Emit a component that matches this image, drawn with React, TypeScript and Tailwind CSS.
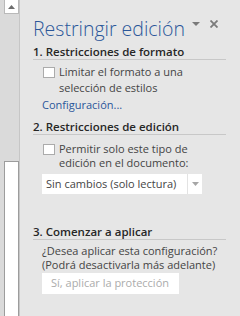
const font = { fontFamily: '"Segoe UI", "Open Sans", "Liberation Sans", sans-serif' };

function Checkbox({ className }: { className: string }) {
  return <span className={`h-[11px] w-[12px] shrink-0 border border-[#ababab] bg-white ${className}`} />;
}

function SectionTitle({ children }: { children: string }) {
  return (
    <div className="border-b border-[#c8c8c8] text-[11.5px] font-semibold leading-[14px] text-[#262626]">
      {children}
    </div>
  );
}

export default function App() {
  return (
    <div className="flex h-[316px] w-[240px] overflow-hidden bg-[#e6e6e6]" style={font}>
      {/* scroll bar */}
      <div className="flex w-[20px] shrink-0 flex-col border-r border-[#c6c6c6] bg-[#dadada] pl-[4px] pr-[1px]">
        <div className="flex h-[14px] w-[15px] items-center justify-center border border-t-0 border-[#b9b9b9] bg-white">
          <svg width="7" height="4" viewBox="0 0 7 4">
            <path d="M0 4 L3.5 0 L7 4 Z" fill="#6d6d6d" />
          </svg>
        </div>
        <div className="h-[147px]" />
        <div className="w-[15px] flex-1 border border-b-0 border-[#9c9c9c] bg-white" />
      </div>

      {/* task pane */}
      <div className="flex-1 whitespace-nowrap pl-[13px] pr-[14px] text-[11px] text-[#444444]">
        <div className="flex items-center pt-[15px]">
          <span className="text-[19.5px] font-light leading-[28px] text-[#2b579a]">Restringir edición</span>
          <svg className="ml-[7px] mt-[-11px]" width="8" height="4" viewBox="0 0 8 4">
            <path d="M0 0 L8 0 L4 4 Z" fill="#7a7a7a" />
          </svg>
          <svg className="ml-[10px] mt-[-11px]" width="8" height="8" viewBox="0 0 8 8">
            <path d="M0.5 0.5 L7.5 7.5 M7.5 0.5 L0.5 7.5" stroke="#7a7a7a" strokeWidth="1.8" />
          </svg>
        </div>

        <div className="mt-[2px]">
          <SectionTitle>1. Restricciones de formato</SectionTitle>
          <div className="mt-[4px] flex gap-[4px] pl-[10px] leading-[16px]">
            <Checkbox className="mt-[3px]" />
            <div>
              Limitar el formato a una
              <br />
              selección de estilos
            </div>
          </div>
          <div className="mt-[1px] pl-[9px] leading-[16px] text-[#2b579a]">Configuración...</div>
        </div>

        <div className="mt-[7px]">
          <SectionTitle>2. Restricciones de edición</SectionTitle>
          <div className="mt-[7px] flex gap-[4px] pl-[10px] leading-[14px]">
            <Checkbox className="mt-[2px]" />
            <div>
              Permitir solo este tipo de
              <br />
              edición en el documento:
            </div>
          </div>
          <div className="ml-[9px] mt-[4px] flex h-[20px] w-[160px] items-center bg-white">
            <span className="flex-1 pl-[4px]">Sin cambios (solo lectura)</span>
            <span className="flex h-[20px] w-[15px] items-center justify-center border-l border-[#e3e3e3]">
              <svg width="7" height="4" viewBox="0 0 7 4">
                <path d="M0 0 L7 0 L3.5 4 Z" fill="#a6a6a6" />
              </svg>
            </span>
          </div>
        </div>

        <div className="mt-[31px]">
          <SectionTitle>3. Comenzar a aplicar</SectionTitle>
          <div className="mt-[4px] pl-[9px] leading-[14px]">
            ¿Desea aplicar esta configuración?
            <br />
            (Podrá desactivarla más adelante)
          </div>
          <div className="ml-[9px] mt-[1px] flex h-[21px] w-[137px] items-center bg-white pl-[9px] text-[#ababab]">
            Sí, aplicar la protección
          </div>
        </div>
      </div>
    </div>
  );
}
